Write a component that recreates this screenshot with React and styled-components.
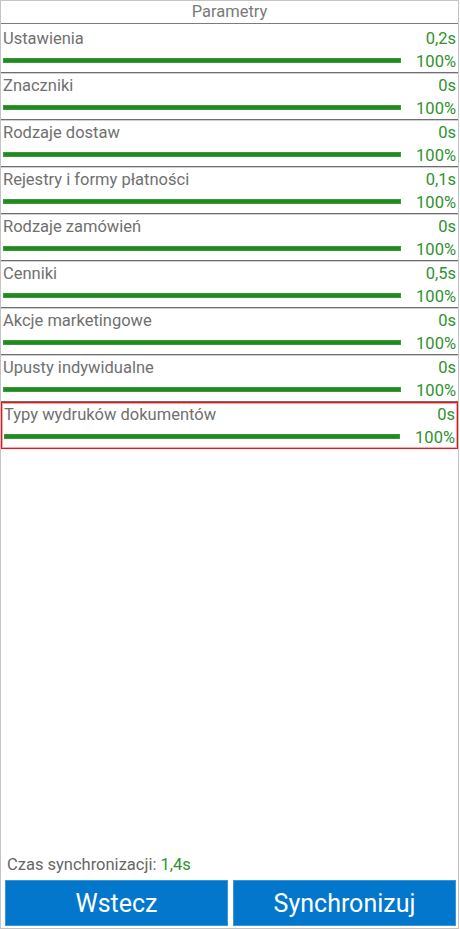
import styled, { createGlobalStyle } from 'styled-components';

const GlobalStyle = createGlobalStyle`
  * { box-sizing: border-box; }
  body {
    margin: 0;
    background: #ffffff;
    font-family: Roboto, "Liberation Sans", sans-serif;
  }
`;

const items = [
  { name: 'Ustawienia', time: '0,2s' },
  { name: 'Znaczniki', time: '0s' },
  { name: 'Rodzaje dostaw', time: '0s' },
  { name: 'Rejestry i formy płatności', time: '0,1s' },
  { name: 'Rodzaje zamówień', time: '0s' },
  { name: 'Cenniki', time: '0,5s' },
  { name: 'Akcje marketingowe', time: '0s' },
  { name: 'Upusty indywidualne', time: '0s' },
  { name: 'Typy wydruków dokumentów', time: '0s', selected: true },
];

const App = () => {
  return (
    <>
      <GlobalStyle />
      <Screen>
        <Header>Parametry</Header>
        <List>
          {items.map((item) => (
            <Row key={item.name} $selected={item.selected}>
              <Line>
                <Label>{item.name}</Label>
                <Value>{item.time}</Value>
              </Line>
              <Line>
                <Track>
                  <Bar style={{ width: '100%' }} />
                </Track>
                <Percent>100%</Percent>
              </Line>
            </Row>
          ))}
        </List>
        <Footer>
          <Summary>
            Czas synchronizacji: <Green>1,4s</Green>
          </Summary>
          <Buttons>
            <Button>Wstecz</Button>
            <Button>Synchronizuj</Button>
          </Buttons>
        </Footer>
      </Screen>
    </>
  );
};

const Screen = styled.div`
  width: 459px;
  height: 929px;
  border: 1px solid #c4c4c4;
  display: flex;
  flex-direction: column;
  background: #ffffff;
`;

const Header = styled.div`
  height: 23px;
  line-height: 22px;
  text-align: center;
  font-size: 16.5px;
  color: #7a7a7a;
  border-bottom: 1px solid #7c7c7c;
`;

const List = styled.div`
  flex: 1;
  display: flex;
  flex-direction: column;
  padding-top: 2px;
`;

const Row = styled.div`
  height: 47px;
  flex-shrink: 0;
  padding: 2px 2px 0 2px;
  border-bottom: 1px solid #6e6e6e;
  box-shadow: 0 1px 0 #d0d0d0;
  ${({ $selected }) =>
    $selected &&
    `
    padding-top: 1px;
    border: 1px solid #e8141b;
    box-shadow: inset 0 0 0 1px #f7a8aa;
  `}
`;

const Line = styled.div`
  height: 22px;
  display: flex;
  align-items: center;
  justify-content: space-between;
  font-size: 16.5px;
  line-height: 22px;
`;

const Label = styled.span`
  color: #707070;
`;

const Value = styled.span`
  color: #2f922f;
`;

const Track = styled.div`
  flex: 1;
  height: 5px;
  margin-top: -2px;
`;

const Bar = styled.div`
  height: 100%;
  background: #218a21;
  border: 1px solid #3a9a3a;
`;

const Percent = styled.span`
  width: 55px;
  text-align: right;
  color: #2f922f;
  margin-top: 1px;
`;

const Footer = styled.div`
  padding: 0 2px 2px 4px;
`;

const Summary = styled.div`
  font-size: 16.5px;
  line-height: 22px;
  color: #666666;
  padding-left: 2px;
  margin-bottom: 4px;
`;

const Green = styled.span`
  color: #2f922f;
`;

const Buttons = styled.div`
  display: grid;
  grid-template-columns: 1fr 1fr;
  gap: 5px;
`;

const Button = styled.button`
  height: 46px;
  border: 1px solid #3d95da;
  background: #0277cc;
  color: #ffffff;
  font-family: Roboto, "Liberation Sans", sans-serif;
  font-size: 25px;
  padding: 0;
  cursor: pointer;
`;

export default App;
